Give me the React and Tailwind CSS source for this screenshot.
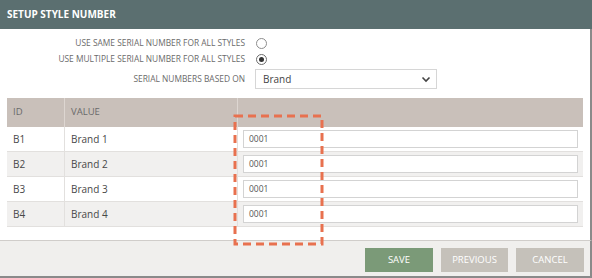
import React from 'react'

const rows = [
  { id: 'B1', value: 'Brand 1' },
  { id: 'B2', value: 'Brand 2' },
  { id: 'B3', value: 'Brand 3' },
  { id: 'B4', value: 'Brand 4' },
]

export default function App(){
  return (
    <div className="relative w-[592px] h-[278px] bg-white overflow-hidden font-['Open_Sans',sans-serif]">
      <div className="h-[29px] bg-[#5b6f70] flex items-center px-[7px]">
        <h1 className="text-white text-[10px] font-bold">SETUP STYLE NUMBER</h1>
      </div>

      <div className="border-r-2 border-[#8a8a8a]">
        <div className="pt-[6px] text-[#6b6b6b] text-[8.4px]">
          <div className="flex items-center h-[16px]">
            <span className="w-[245px] text-right">USE SAME SERIAL NUMBER FOR ALL STYLES</span>
            <span className="ml-[11px] w-[11px] h-[11px] rounded-full border border-[#8d8d8d] bg-white"></span>
          </div>
          <div className="flex items-center h-[16px]">
            <span className="w-[245px] text-right">USE MULTIPLE SERIAL NUMBER FOR ALL STYLES</span>
            <span className="ml-[11px] w-[11px] h-[11px] rounded-full border border-[#6d6d6d] bg-white flex items-center justify-center">
              <span className="w-[5px] h-[5px] rounded-full bg-[#333]"></span>
            </span>
          </div>
          <div className="flex items-center h-[22px] mt-[1px]">
            <span className="w-[245px] text-right">SERIAL NUMBERS BASED ON</span>
            <div className="ml-[10px] w-[182px] h-[20px] border border-[#d6d6d6] flex items-center justify-between pl-[7px] pr-[5px]">
              <span className="text-[10px] text-[#444]">Brand</span>
              <svg width="10" height="7" viewBox="0 0 10 7">
                <path d="M1.5 1.5 L5 5 L8.5 1.5" fill="none" stroke="#444" strokeWidth="1.6" />
              </svg>
            </div>
          </div>
        </div>

        <div className="mt-[8px] mx-[7px] w-[576px]">
          <div className="flex h-[29px] bg-[#c9c0ba] text-[9.5px] text-[#6a6a6a]">
            <div className="w-[58px] flex items-center pl-[6px] border-r border-[#ddd6d1]">ID</div>
            <div className="w-[173px] flex items-center pl-[6px] border-r border-[#ddd6d1]">VALUE</div>
            <div className="flex-1"></div>
          </div>
          {rows.map((r, i) => (
            <div key={r.id} className={`flex h-[25px] text-[10px] text-[#484848] border-b border-[#e2e0de] ${i % 2 ? 'bg-[#f1f0ef]' : 'bg-white'}`}>
              <div className="w-[58px] flex items-center pl-[6px] border-r border-[#e2e0de]">{r.id}</div>
              <div className="w-[173px] flex items-center pl-[6px] border-r border-[#e2e0de]">{r.value}</div>
              <div className="flex-1 flex items-center pl-[5px] pr-[5px]">
                <div className="w-full h-[18px] bg-white border border-[#d3d3d3] flex items-center pl-[5px] text-[8.5px] text-[#555]">0001</div>
              </div>
            </div>
          ))}
        </div>

        <div className="h-[13px]"></div>
      </div>

      <div className="h-[38px] bg-[#f0efed] border-t border-[#d0cdca] border-r-2 border-r-[#8a8a8a] border-b-2 border-b-[#8a8a8a] flex items-start justify-end pt-[7px] pr-[6px] gap-[8px] text-[9.5px] text-white">
        <button className="w-[68px] h-[24px] bg-[#7b9a78]">SAVE</button>
        <button className="w-[67px] h-[24px] bg-[#c5c1ba]">PREVIOUS</button>
        <button className="w-[68px] h-[24px] bg-[#c5c1ba]">CANCEL</button>
      </div>

      <svg className="absolute left-[233px] top-[114px]" width="92" height="133" viewBox="0 0 92 133">
        <rect x="2" y="2" width="87" height="128" fill="none" stroke="#e8714f" strokeWidth="3" strokeDasharray="8 5" />
      </svg>
    </div>
  )
}
